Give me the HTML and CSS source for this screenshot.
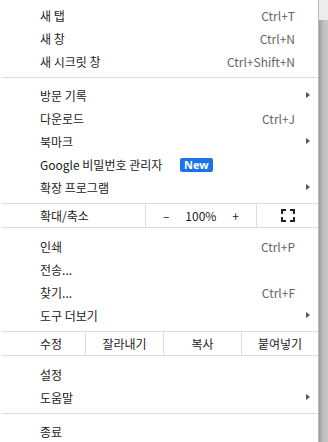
FILE: index.html
```html
<!DOCTYPE html>
<html>
<head>
    <meta charset="UTF-8">
    <title>Chrome 메뉴</title>
    <link rel="stylesheet" href="styles.css">
</head>
<body>
    <div class="frame">
        <div class="menu">
            <div class="item"><span class="label">새 탭</span><span class="key">Ctrl+T</span></div>
            <div class="item"><span class="label">새 창</span><span class="key">Ctrl+N</span></div>
            <div class="item"><span class="label">새 시크릿 창</span><span class="key">Ctrl+Shift+N</span></div>
            <div class="sep"></div>
            <div class="item"><span class="label">방문 기록</span><span class="arrow"></span></div>
            <div class="item"><span class="label">다운로드</span><span class="key">Ctrl+J</span></div>
            <div class="item"><span class="label">북마크</span><span class="arrow"></span></div>
            <div class="item"><span class="label">Google 비밀번호 관리자</span><span class="badge">New</span></div>
            <div class="item"><span class="label">확장 프로그램</span><span class="arrow"></span></div>
            <div class="sep sep-tight"></div>
            <div class="zoom-row">
                <div class="zoom-label">확대/축소</div>
                <div class="zoom-ctrl">
                    <span class="zoom-btn">–</span>
                    <span class="zoom-val">100%</span>
                    <span class="zoom-btn">+</span>
                </div>
                <div class="zoom-full">
                    <svg width="14" height="13" viewBox="0 0 14 13">
                        <path d="M1 5V1h4M9 1h4v4M13 8v4H9M5 12H1V8" fill="none" stroke="#222" stroke-width="2"/>
                    </svg>
                </div>
            </div>
            <div class="gap"></div>
            <div class="item"><span class="label">인쇄</span><span class="key">Ctrl+P</span></div>
            <div class="item"><span class="label">전송...</span></div>
            <div class="item"><span class="label">찾기...</span><span class="key">Ctrl+F</span></div>
            <div class="item"><span class="label">도구 더보기</span><span class="arrow"></span></div>
            <div class="sep sep-tight"></div>
            <div class="edit-row">
                <div class="edit-first">수정</div>
                <div class="edit-cell">잘라내기</div>
                <div class="edit-cell">복사</div>
                <div class="edit-cell">붙여넣기</div>
            </div>
            <div class="gap"></div>
            <div class="item"><span class="label">설정</span></div>
            <div class="item"><span class="label">도움말</span><span class="arrow"></span></div>
            <div class="sep"></div>
            <div class="item"><span class="label">종료</span></div>
        </div>
        <div class="scroll">
            <div class="scroll-top"></div>
            <div class="scroll-thumb"></div>
        </div>
    </div>
</body>
</html>
```

FILE: styles.css
```css
body {
    margin: 0;
    background-color: #fff;
    font-family: "Noto Sans CJK KR", "Noto Sans", sans-serif;
    font-size: 12px;
    color: #222;
}

.frame {
    display: flex;
    height: 442px;
    overflow: hidden;
}

.menu {
    width: 319px;
    padding-top: 4px;
    box-sizing: border-box;
    background-color: #fff;
}

.item {
    display: flex;
    align-items: center;
    height: 23px;
    padding-left: 40px;
    padding-right: 23px;
    position: relative;
}

.label {
    flex: 1;
    white-space: nowrap;
}

.key {
    color: #666;
}

.arrow {
    position: absolute;
    right: 8px;
    top: 8px;
    width: 0;
    height: 0;
    border-top: 3.5px solid transparent;
    border-bottom: 3.5px solid transparent;
    border-left: 4px solid #555;
}

.badge {
    position: absolute;
    left: 180px;
    top: 5px;
    background-color: #1a73e8;
    color: #fff;
    font-family: "Noto Sans", sans-serif;
    font-weight: 700;
    font-size: 11px;
    line-height: 14px;
    padding: 0 4px;
    border-radius: 2px;
}

.sep {
    height: 1px;
    background-color: #ddd;
    margin: 4px 0 6px 2px;
}

.sep-tight {
    margin-bottom: 0;
}

.gap {
    height: 7px;
    border-top: 1px solid #ddd;
    margin-left: 2px;
}

.zoom-row, .edit-row {
    display: flex;
    height: 23px;
    align-items: stretch;
}

.zoom-label {
    width: 105px;
    padding-left: 40px;
    border-right: 1px solid #ddd;
    display: flex;
    align-items: center;
}

.zoom-ctrl {
    width: 111px;
    border-right: 1px solid #ddd;
    display: flex;
    align-items: center;
    justify-content: space-between;
    padding: 0 17px;
    box-sizing: border-box;
}

.zoom-full {
    flex: 1;
    display: flex;
    align-items: center;
    justify-content: flex-end;
    padding-right: 23px;
}

.edit-first {
    width: 45px;
    padding-left: 40px;
    border-right: 1px solid #ddd;
    display: flex;
    align-items: center;
}

.edit-cell {
    width: 77px;
    border-right: 1px solid #ddd;
    display: flex;
    align-items: center;
    justify-content: center;
}

.edit-cell:last-child {
    border-right: none;
    width: 76px;
}

.scroll {
    width: 9px;
    border-left: 1px solid #b8b8b8;
    display: flex;
    flex-direction: column;
}

.scroll-top {
    height: 20px;
    background-color: #ececec;
}

.scroll-thumb {
    flex: 1;
    background: linear-gradient(to right, #9a9a9a, #bdbdbd 40%, #c8c8c8);
}
```
